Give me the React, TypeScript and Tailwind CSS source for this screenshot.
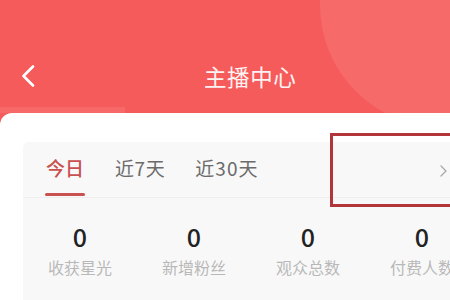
import React from "react";

const font = { fontFamily: '"Noto Sans CJK SC", "Noto Sans", sans-serif' };

export default function App() {
  const stats = [
    { v: "0", l: "收获星光" },
    { v: "0", l: "新增粉丝" },
    { v: "0", l: "观众总数" },
    { v: "0", l: "付费人数" },
  ];
  return (
    <div
      className="relative w-[450px] h-[300px] overflow-hidden bg-[#f65b5b]"
      style={font}
    >
      {/* decorative circle */}
      <div className="absolute left-[320px] top-[-117px] w-[244px] h-[244px] rounded-full bg-[#f76a6a]" />

      <div className="relative flex flex-col">
        {/* header */}
        <div className="flex flex-col h-[113px]">
          <div className="mt-[54px] h-[44px] flex items-center">
            <svg
              className="ml-[21px]"
              width="14"
              height="24"
              viewBox="0 0 14 24"
              fill="none"
            >
              <path
                d="M12 2.5 L2.5 12 L12 21.5"
                stroke="#ffffff"
                strokeWidth="2.6"
                strokeLinecap="round"
                strokeLinejoin="round"
              />
            </svg>
            <span className="ml-[169px] text-[22.5px] leading-[30px] text-[#fdf2f2] tracking-[0.6px]">
              主播中心
            </span>
          </div>
          <div className="mt-auto w-[125px] h-[6px] bg-[#f76868]" />
        </div>

        {/* card */}
        <div className="bg-white rounded-tl-[12px] h-[187px] pl-[23px] pt-[29px]">
          <div className="bg-[#f8f8f8] rounded-tl-[6px] h-full flex flex-col">
            <div className="h-[56px] flex items-stretch pl-[22px] border-b border-[#eeeeee]">
              <div className="flex flex-col items-center w-[40px]">
                <span className="mt-[14px] text-[19px] leading-[24px] font-medium text-[#c9514f]">
                  今日
                </span>
                <div className="mt-auto mb-[1px] w-[40px] h-[3px] rounded-full bg-[#c9514f]" />
              </div>
              <div className="ml-[30px] flex flex-col">
                <span className="mt-[14px] text-[19px] leading-[24px] text-[#6b6b6b] tracking-[0.6px]">
                  近7天
                </span>
              </div>
              <div className="ml-[30px] flex flex-col">
                <span className="mt-[14px] text-[19px] leading-[24px] text-[#6b6b6b] tracking-[1px]">
                  近30天
                </span>
              </div>
              <div className="ml-auto mr-[3px] flex items-center pt-[2px]">
                <svg width="7" height="12" viewBox="0 0 7 12" fill="none">
                  <path
                    d="M1 1 L6 6 L1 11"
                    stroke="#a8a8a8"
                    strokeWidth="1.3"
                    strokeLinecap="round"
                    strokeLinejoin="round"
                  />
                </svg>
              </div>
            </div>
            <div className="grid grid-cols-[repeat(4,114px)] pt-[24px]">
              {stats.map((s, i) => (
                <div key={i} className="flex flex-col items-center">
                  <span className="text-[25px] leading-[28px] font-medium text-[#222222]">
                    {s.v}
                  </span>
                  <span className="mt-[6px] text-[16px] leading-[22px] whitespace-nowrap text-[#b8b8b8]">
                    {s.l}
                  </span>
                </div>
              ))}
            </div>
          </div>
        </div>
      </div>

      {/* highlight box */}
      <div className="absolute left-[330px] top-[133px] w-[140px] h-[74px] border-[3px] border-[#b2353a]" />
    </div>
  );
}
